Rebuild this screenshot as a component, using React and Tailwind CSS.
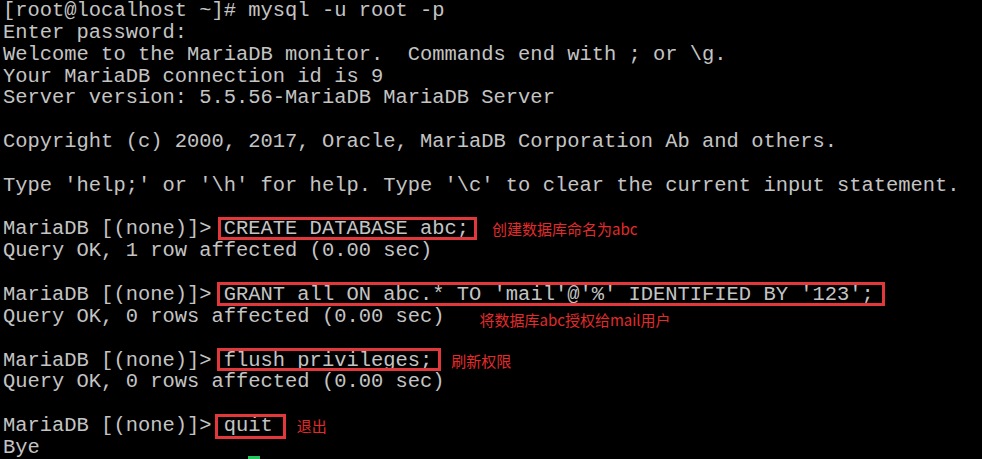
const lines = [
  { t: '[root@localhost ~]# mysql -u root -p' },
  { t: 'Enter password:' },
  { t: 'Welcome to the MariaDB monitor.  Commands end with ; or \\g.' },
  { t: 'Your MariaDB connection id is 9' },
  { t: 'Server version: 5.5.56-MariaDB MariaDB Server' },
  { t: '' },
  { t: 'Copyright (c) 2000, 2017, Oracle, MariaDB Corporation Ab and others.' },
  { t: '' },
  { t: "Type 'help;' or '\\h' for help. Type '\\c' to clear the current input statement." },
  { t: '' },
  {
    t: 'MariaDB [(none)]> ',
    cmd: 'CREATE DATABASE abc;',
    box: 'left-[-6px] right-[-8px] top-[-1px] bottom-[0px]',
    note: '创建数据库命名为abc',
    noteCls: 'ml-[23px]',
  },
  { t: 'Query OK, 1 row affected (0.00 sec)' },
  { t: '' },
  {
    t: 'MariaDB [(none)]> ',
    cmd: "GRANT all ON abc.* TO 'mail'@'%' IDENTIFIED BY '123';",
    box: 'left-[-7px] right-[-11px] top-[-2px] bottom-[0px]',
  },
  {
    t: 'Query OK, 0 rows affected (0.00 sec)',
    note: '将数据库abc授权给mail用户',
    noteCls: 'ml-[35px] relative top-[3px]',
  },
  { t: '' },
  {
    t: 'MariaDB [(none)]> ',
    cmd: 'flush privileges;',
    box: 'left-[-7px] right-[-9px] top-[-2px] bottom-[0px]',
    note: '刷新权限',
    noteCls: 'ml-[19px]',
  },
  { t: 'Query OK, 0 rows affected (0.00 sec)' },
  { t: '' },
  {
    t: 'MariaDB [(none)]> ',
    cmd: 'quit',
    box: 'left-[-9px] right-[-13px] top-[-1px] bottom-[-2px]',
    note: '退出',
    noteCls: 'ml-[24px]',
  },
  { t: 'Bye' },
];

export default function App() {
  return (
    <div className="w-[982px] h-[459px] overflow-hidden bg-black pl-[3px] text-[#c4c4c4] font-['Liberation_Mono',monospace] text-[20.45px]">
      {lines.map((l, i) => (
        <div key={i} className="h-[21.85px] leading-[21.85px] whitespace-pre flex items-center">
          <span>{l.t}</span>
          {l.cmd && (
            <span className="relative">
              {l.cmd}
              <span className={`absolute border-[3px] border-[#e2383b] ${l.box}`} />
            </span>
          )}
          {l.note && (
            <span
              className={`text-[15px] leading-[21.85px] text-[#e32b2b] font-['Noto_Sans_CJK_SC','Noto_Sans',sans-serif] ${l.noteCls}`}
            >
              {l.note}
            </span>
          )}
        </div>
      ))}
      <div className="h-[21.85px] -mt-[3px] pl-[245px]">
        <div className="w-[12px] h-[6px] bg-[#22c55e]" />
      </div>
    </div>
  );
}
